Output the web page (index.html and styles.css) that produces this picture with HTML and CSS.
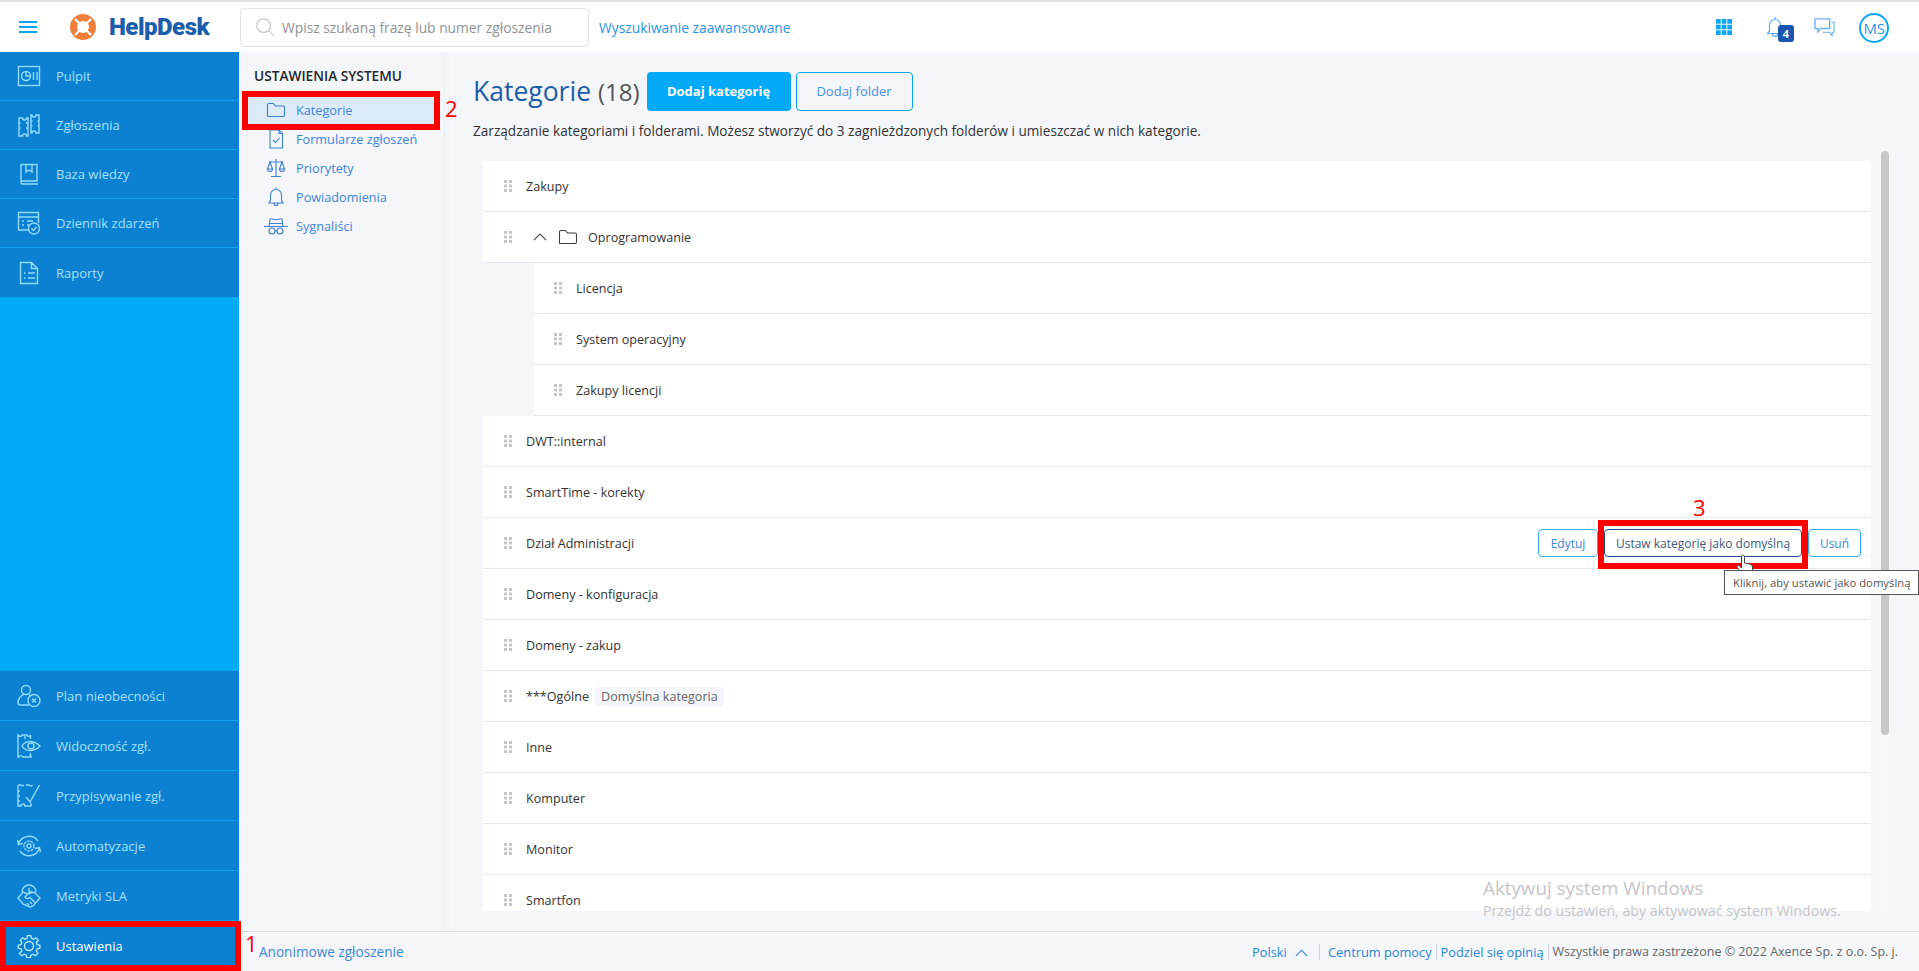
FILE: index.html
```html
<!DOCTYPE html>
<html lang="pl">
<head>
<meta charset="utf-8">
<title>HelpDesk - Kategorie</title>
<link rel="stylesheet" href="styles.css">
</head>
<body>
<svg class="sprite" width="0" height="0" aria-hidden="true">
  <symbol id="folder" viewBox="0 0 20 16"><path d="M1.5 14V3a1.5 1.5 0 0 1 1.5-1.500h4.500l2 2.500H17a1.500 1.500 0 0 1 1.500 1.500V13a1.500 1.500 0 0 1-1.500 1.500H2a.5.5 0 0 1-.5-.5z" fill="none" stroke="currentColor" stroke-width="1.100"/></symbol>
  <symbol id="grip" viewBox="0 0 8 12"><g fill="#c4c6c9"><rect x="0" y="0" width="3" height="3"/><rect x="5" y="0" width="3" height="3"/><rect x="0" y="4.500" width="3" height="3"/><rect x="5" y="4.500" width="3" height="3"/><rect x="0" y="9" width="3" height="3"/><rect x="5" y="9" width="3" height="3"/></g></symbol>
</svg>
<div class="app">
  <header class="topbar">
    <button class="burger" aria-label="Menu"><span></span><span></span><span></span></button>
    <div class="logo">
      <svg width="28" height="28" viewBox="0 0 28 28"><circle cx="14" cy="14" r="9.500" fill="none" stroke="#f07f3c" stroke-width="7"/><g stroke="#fff" stroke-width="2.200"><path d="M6 6l5 5M22 6l-5 5M6 22l5-5M22 22l-5-5"/></g></svg>
      <span class="logo-text">HelpDesk</span>
    </div>
    <div class="search">
      <svg width="20" height="20" viewBox="0 0 22 22" fill="none" stroke="#c8cbce" stroke-width="1.400"><circle cx="9.500" cy="9.500" r="7.500"/><path d="M15 15l6 6"/></svg>
      <span>Wpisz szukaną frazę lub numer zgłoszenia</span>
    </div>
    <a class="adv">Wyszukiwanie zaawansowane</a>
    <div class="top-icons">
      <svg class="grid-ic" width="16" height="16" viewBox="0 0 17 17" fill="#0aa6f5"><rect width="5" height="5"/><rect x="6" width="5" height="5"/><rect x="12" width="5" height="5"/><rect y="6" width="5" height="5"/><rect x="6" y="6" width="5" height="5"/><rect x="12" y="6" width="5" height="5"/><rect y="12" width="5" height="5"/><rect x="6" y="12" width="5" height="5"/><rect x="12" y="12" width="5" height="5"/></svg>
      <div class="bell">
        <svg width="18" height="22" viewBox="0 0 18 22" fill="none" stroke="#5aaaf5" stroke-width="1.200"><path d="M9 1v2M3.500 15V9a5.500 5.500 0 0 1 11 0v6l2 2.500H1.500zM6.500 18a2.500 2.500 0 0 0 5 0"/></svg>
        <span class="badge">4</span>
      </div>
      <svg class="chat-ic" width="21" height="20" viewBox="0 0 22 20" fill="none" stroke="#6fb2f5" stroke-width="1.200"><path d="M1 1.500h15.500v10H7L4 15v-3.500H1z" stroke-width="1.500"/><path d="M19 5h2v10.500h-2V19l-3-3.500H9"/></svg>
      <div class="avatar">MS</div>
    </div>
  </header>

  <div class="middle">
    <nav class="side">
      <div class="side-group">
        <a class="side-item"><svg class="side-ic" viewBox="0 0 24 24"><rect x="1.500" y="2.500" width="21" height="19"/><circle cx="9" cy="12" r="4.500"/><path d="M9 8v4h4M16.500 8v8M20 8v8"/></svg><span>Pulpit</span></a>
        <a class="side-item"><svg class="side-ic" viewBox="0 0 24 24"><path d="M2 5h3.500a2 2 0 0 0 4 0H11v18H9.500a2 2 0 0 0-4 0H2zM14 2h1a2 2 0 0 0 4 0h3v18h-3a2 2 0 0 0-4 0h-1zM2 10h1.500M2 15h1.500M11 10H9M11 15H9M14 8h1.500M14 13h1.500M22 8h-1.500M22 13h-1.500"/></svg><span>Zgłoszenia</span></a>
        <a class="side-item"><svg class="side-ic" viewBox="0 0 24 24"><path d="M4 2.500h16V19H5.500A1.500 1.500 0 0 0 4 20.500v-18zM4 20.500A1.500 1.500 0 0 0 5.500 22H21M9 2.500V10l3-2 3 2V2.500"/></svg><span>Baza wiedzy</span></a>
        <a class="side-item"><svg class="side-ic" viewBox="0 0 24 24"><path d="M12 19H1.500V1.500h20V12M1.500 6h20M5 10h2M10 10h6M5 14h2M10 14h2"/><circle cx="17" cy="17.500" r="5.500"/><path d="M14.500 17.500l2 2 3-3.500"/></svg><span>Dziennik zdarzeń</span></a>
        <a class="side-item"><svg class="side-ic" viewBox="0 0 24 24"><path d="M3.500 1.500h11l6 6v15h-17zM14.500 1.500v6h6M7 12h1.500M11 12h7M7 17h1.500M11 17h7"/></svg><span>Raporty</span></a>
      </div>
      <div class="side-group bottom">
        <a class="side-item tall"><svg class="side-ic" viewBox="0 0 24 24"><circle cx="9" cy="6" r="4.500"/><path d="M12 21H3a2 2 0 0 1-2-2c0-4 3-8 6-8.500M12 11c1 .3 1.500.5 2 1"/><circle cx="17" cy="16.500" r="6"/><path d="M15 14.500l4 4M19 14.500l-4 4"/></svg><span>Plan nieobecności</span></a>
        <a class="side-item tall"><svg class="side-ic" viewBox="0 0 24 24"><path d="M8 5V1H5a1.800 1.800 0 0 1-3.500 0H1v22h1a1.800 1.800 0 0 1 3.500 0H14v-1a1.800 1.800 0 0 1 0-3M9 1h1a1.800 1.800 0 0 0 3.500 0v4"/><path d="M5 12c3.500-6 12-6 18 0-6 6-14.500 6-18 0z"/><circle cx="14" cy="12" r="3"/></svg><span>Widoczność zgł.</span></a>
        <a class="side-item tall"><svg class="side-ic" viewBox="0 0 24 24"><path d="M9 1h3a2 2 0 0 0 3.500 0M1 1h3a2 2 0 0 0 3 0M1 1v21h3a2 2 0 0 1 4 0h6v-3M1 7h2M1 12h2M1 17h2"/><path d="M9 13l4 5L22.500 1"/></svg><span>Przypisywanie zgł.</span></a>
        <a class="side-item tall"><svg class="side-ic" viewBox="0 0 24 24"><path d="M1.500 10A11 11 0 0 1 21 7M22.500 14A11 11 0 0 1 3 17M.5 6l1 4.500L6 9.500M23.500 18l-1-4.500-4.500 1"/><circle cx="12" cy="12" r="5" stroke-dasharray="2.500 1"/><circle cx="12" cy="12" r="2"/></svg><span>Automatyzacje</span></a>
        <a class="side-item tall"><svg class="side-ic" viewBox="0 0 24 24"><path d="M5 8a7 7 0 0 1 14 0M12 4v4h3M1 14l5-6 5 2 6-2 6 6-7 8-3 1-7-3zM11 10l-3 3c1 2 3 2 5 .500l5 5M13 18l2 2M10 19l2 2"/></svg><span>Metryki SLA</span></a>
        <a class="side-item tall current"><svg class="side-ic" viewBox="0 0 24 24"><path d="M10 1h4l.600 3 2.400 1 2.500-1.700 2.800 2.800L20 8.500l1 2.400 3 .600v3.500l-3 .6-1 2.400 1.800 2.500-2.800 2.800-2.500-1.700-2.400 1-.6 2.900h-4l-.6-2.900-2.400-1-2.500 1.700-2.800-2.800L4 18l-1-2.400-3-.6V11.500l3-.6 1-2.400-1.800-2.500L5 3.300 7.500 5l2.400-1z" transform="translate(1.300 .8) scale(.9)"/><circle cx="12" cy="12" r="4.500"/></svg><span>Ustawienia</span></a>
      </div>
    </nav>

    <aside class="subnav">
      <h2>USTAWIENIA SYSTEMU</h2>
      <a class="sub-item active"><svg class="sub-ic" viewBox="0 0 20 16"><use href="#folder"/></svg><span>Kategorie</span></a>
      <a class="sub-item"><svg class="sub-ic" viewBox="0 0 20 20"><path d="M4 1h9l3.500 3.500V19H4zM13 1v3.500h3.500M7 11l2.500 2.500L13.500 9"/></svg><span>Formularze zgłoszeń</span></a>
      <a class="sub-item"><svg class="sub-ic" viewBox="0 0 20 20"><path d="M10 1v17M5 18.500h10M3 4h14M4 4L1.500 11h5zM16 4l-2.500 7h5zM1.500 11a2.500 2.500 0 0 0 5 0M13.500 11a2.500 2.500 0 0 0 5 0"/></svg><span>Priorytety</span></a>
      <a class="sub-item"><svg class="sub-ic" viewBox="0 0 20 20"><path d="M10 .5v2M4.500 13V8a5.500 5.500 0 0 1 11 0v5l1.500 3H3zM8 16.500a2 2 0 0 0 4 0"/></svg><span>Powiadomienia</span></a>
      <a class="sub-item"><svg class="sub-ic wide" viewBox="0 0 24 20"><path d="M0 10.500h24M5 10l1-6c0-1.500 1.500-1.500 2.500-1 1.500.7 5 .7 7 0 1-.5 2.500-.5 2.500 1l1 6M5.500 7.500h13"/><circle cx="8" cy="15" r="3"/><circle cx="16" cy="15" r="3"/><path d="M11 15h2"/></svg><span>Sygnaliści</span></a>
    </aside>

    <main class="content">
      <div class="title-row">
        <h1>Kategorie <small>(18)</small></h1>
        <button class="btn primary">Dodaj kategorię</button>
        <button class="btn outline-big">Dodaj folder</button>
      </div>
      <p class="lead">Zarządzanie kategoriami i folderami. Możesz stworzyć do 3 zagnieżdzonych folderów i umieszczać w nich kategorie.</p>
      <div class="list-wrap">
        <ul class="list">
          <li class="row"><svg class="grip"><use href="#grip"/></svg><span>Zakupy</span></li>
          <li class="row folder-row"><svg class="grip"><use href="#grip"/></svg><svg class="chev" viewBox="0 0 14 8"><path d="M1 7l6-6 6 6"/></svg><svg class="f-ic" viewBox="0 0 20 16"><use href="#folder"/></svg><span>Oprogramowanie</span></li>
          <li class="row sub"><svg class="grip"><use href="#grip"/></svg><span>Licencja</span></li>
          <li class="row sub"><svg class="grip"><use href="#grip"/></svg><span>System operacyjny</span></li>
          <li class="row sub"><svg class="grip"><use href="#grip"/></svg><span>Zakupy licencji</span></li>
          <li class="row"><svg class="grip"><use href="#grip"/></svg><span>DWT::internal</span></li>
          <li class="row"><svg class="grip"><use href="#grip"/></svg><span>SmartTime - korekty</span></li>
          <li class="row hover"><svg class="grip"><use href="#grip"/></svg><span>Dział Administracji</span>
            <div class="row-actions">
              <button class="mini edit">Edytuj</button>
              <button class="mini dark">Ustaw kategorię jako domyślną</button>
              <button class="mini del">Usuń</button>
            </div>
          </li>
          <li class="row"><svg class="grip"><use href="#grip"/></svg><span>Domeny - konfiguracja</span></li>
          <li class="row"><svg class="grip"><use href="#grip"/></svg><span>Domeny - zakup</span></li>
          <li class="row"><svg class="grip"><use href="#grip"/></svg><span>***Ogólne</span><span class="tag">Domyślna kategoria</span></li>
          <li class="row"><svg class="grip"><use href="#grip"/></svg><span>Inne</span></li>
          <li class="row"><svg class="grip"><use href="#grip"/></svg><span>Komputer</span></li>
          <li class="row"><svg class="grip"><use href="#grip"/></svg><span>Monitor</span></li>
          <li class="row"><svg class="grip"><use href="#grip"/></svg><span>Smartfon</span></li>
        </ul>
        <div class="scroll"><div class="thumb"></div></div>
      </div>
      <footer class="foot">
        <a class="anon">Anonimowe zgłoszenie</a>
        <div class="foot-right">
          <a class="lang">Polski <svg class="chev small" viewBox="0 0 14 8"><path d="M1 7l6-6 6 6"/></svg></a>
          <a>Centrum pomocy</a>
          <a>Podziel się opinią</a>
          <span>Wszystkie prawa zastrzeżone © 2022 Axence Sp. z o.o. Sp. j.</span>
        </div>
      </footer>
    </main>
  </div>
</div>

<div class="mark m1"></div><div class="num n1">1</div>
<div class="mark m2"></div><div class="num n2">2</div>
<div class="mark m3"></div><div class="num n3">3</div>
<svg class="cursor" width="20" height="24" viewBox="0 0 20 24"><path d="M6 1.500c1-1 2.500 0 2.500 1V9l5 1c2 .5 3 1.500 3 3v4c0 3-2 5.500-5.500 5.500S5 20 3 16l-2-3c-.5-1.500 1-2.500 2-1.500L5.500 14V3z" fill="#fff" stroke="#444" stroke-width="1"/></svg>
<div class="tooltip">Kliknij, aby ustawić jako domyślną</div>
<div class="winmark"><div class="w1">Aktywuj system Windows</div><div class="w2">Przejdź do ustawień, aby aktywować system Windows.</div></div>
</body>
</html>
```
FILE: styles.css
```css
* { box-sizing: border-box; }
html, body { margin: 0; height: 100%; overflow: hidden; }
body { font-family: "Open Sans", "Noto Sans", sans-serif; font-size: 13px; color: #333; background: #f4f6fa; }
a { text-decoration: none; color: inherit; }
button { font-family: inherit; }
.sprite { position: absolute; }
.app { height: 971px; display: flex; flex-direction: column; }

.topbar { height: 52px; flex: none; background: #fff; border-top: 2px solid #dfe0e2; display: flex; align-items: center; }
.burger { width: 18px; height: 12px; margin-left: 19px; padding: 0; border: 0; background: none; display: flex; flex-direction: column; justify-content: space-between; }
.burger span { display: block; height: 2px; background: #0aa6f5; }
.logo { display: flex; align-items: center; margin-left: 32px; width: 171px; }
.logo svg { flex: none; }
.logo-text { font-family: Roboto, sans-serif; font-weight: 900; font-size: 24px; letter-spacing: -.5px; color: #1c5dab; margin-left: 12px; }
.search { width: 349px; height: 39px; border: 1px solid #e1e3e6; border-radius: 4px; display: flex; align-items: center; padding-left: 14px; gap: 7px; font-size: 13.800px; color: #8f9296; white-space: nowrap; }
.adv { margin-left: 10px; color: #2b95e6; font-size: 13.800px; }
.top-icons { margin-left: auto; display: flex; align-items: center; padding-right: 30px; }
.grid-ic { margin-right: 34px; }
.bell { position: relative; width: 18px; height: 22px; margin-right: 30px; }
.badge { position: absolute; left: 12px; top: 9px; width: 16px; height: 17px; border-radius: 3px; background: #1a56ad; color: #fff; font-size: 11px; font-weight: 700; text-align: center; line-height: 17px; }
.chat-ic { margin-right: 24px; }
.avatar { width: 30px; height: 30px; margin-top: 1px; border-radius: 50%; border: 2px solid #0aa6f5; color: #2b95e6; font-size: 15px; display: flex; align-items: center; justify-content: center; letter-spacing: -.3px; }

.middle { flex: 1; min-height: 0; display: flex; }
.side { width: 239px; flex: none; background: #04a9f8; display: flex; flex-direction: column; justify-content: space-between; }
.side-item { display: flex; align-items: center; height: 49px; background: #0c80d1; border-bottom: 1px solid #0aa0ee; padding-left: 17px; color: #a3e0fb; font-size: 13px; }
.side-group > .side-item:last-child { border-bottom: 0; }
.side-item.tall { height: 50px; }
.side-item.current { color: #fff; }
.side-ic { width: 24px; height: 24px; flex: none; margin-right: 15px; fill: none; stroke: #8fdcfb; stroke-width: 1.400; }
.current .side-ic { stroke: #b8ecff; }

.subnav { width: 204px; flex: none; padding-top: 15px; background: #f4f6fa; }
.subnav h2 { margin: 0 0 10px 15px; font-size: 13.700px; font-weight: 600; color: #23262a; line-height: 18px; white-space: nowrap; }
.sub-item { display: flex; align-items: center; height: 29px; padding-left: 23px; margin: 0 0 0 9px; width: 186px; color: #3f85d9; font-size: 12.700px; white-space: nowrap; }
.sub-item.active { background: #dbebf8; }
.sub-ic { width: 20px; height: 20px; flex: none; margin-right: 10px; fill: none; stroke: #3f7fd0; stroke-width: 1.100; margin-left: -5px; }
.sub-ic.wide { width: 26px; margin-left: -8px; margin-right: 7px; }
.sub-item.active .sub-ic { color: #3f7fd0; height: 16px; }

.content { flex: 1; min-width: 0; position: relative; background: #f4f6fa; box-shadow: inset 7px 0 6px -5px #eceff3; display: flex; flex-direction: column; }
.title-row { display: flex; align-items: center; padding: 20px 0 0 30px; height: 58px; flex: none; }
.title-row h1 { margin: 0; font-size: 26.500px; font-weight: 400; color: #1c5dab; line-height: 38px; white-space: nowrap; }
.title-row small { font-size: 24px; color: #555; }
.btn { height: 39px; border-radius: 4px; font-size: 13px; }
.primary { margin-left: 7px; width: 144px; border: 0; background: #04a9f8; color: #fff; font-weight: 700; }
.outline-big { margin-left: 5px; width: 117px; border: 1px solid #0aa6f5; background: transparent; color: #4a90e2; }
.lead { margin: 12px 0 0 30px; font-size: 13.600px; color: #333; line-height: 18px; height: 18px; white-space: nowrap; flex: none; }
.list-wrap { margin-top: 21px; height: 750px; flex: none; padding-left: 40px; display: flex; }
.list { list-style: none; margin: 0; padding: 0; width: 1388px; height: 750px; overflow: hidden; }
.row { position: relative; display: flex; align-items: center; height: 51px; background: #fff; border-bottom: 1px solid #e4e8ec; padding-left: 21px; font-size: 12.600px; color: #333; white-space: nowrap; }
.row .grip { width: 8px; height: 12px; flex: none; margin-right: 14px; }
.row.sub { margin-left: 51px; padding-left: 20px; }
.folder-row .chev { margin-left: 7px; margin-right: 11px; }
.chev { width: 14px; height: 8px; fill: none; stroke: #4b5057; stroke-width: 1.200; }
.f-ic { width: 20px; height: 16px; color: #3a3f45; margin-right: 10px; }
.tag { margin-left: 6px; background: #f4f6fa; height: 19px; line-height: 19px; padding: 0 6px; border-radius: 4px; color: #666; }
.row-actions { margin-left: auto; margin-right: 10px; display: flex; gap: 6px; }
.mini { height: 28px; border: 1px solid #2faef0; border-radius: 4px; background: #fff; color: #3f85d9; font-size: 12px; padding: 0; white-space: nowrap; }
.mini.edit { width: 60px; }
.mini.del { width: 53px; }
.mini.dark { border-color: #1d4f91; color: #3d5a80; width: 198px; }
.scroll { width: 18px; position: relative; }
.scroll::before { content: ""; position: absolute; left: 10px; top: -10px; bottom: 0; width: 8px; background: #f8f9fc; }
.thumb { position: absolute; left: 10px; top: -10px; width: 8px; height: 584px; background: #c7c7c7; border-radius: 4px; }

.foot { position: relative; border-top: 1px solid #d9dce0; height: 40px; flex: none; margin-top: 20px; margin-left: -204px; display: flex; align-items: center; justify-content: space-between; font-size: 13.600px; background: #f4f6fa; padding: 0 21px 0 20px; }
.anon { color: #3f85d9; }
.foot-right { display: flex; align-items: center; font-size: 12.500px; color: #666; }
.foot-right a { color: #2b85d9; font-size: 12.800px; padding: 0 4px; border-right: 1px solid #ccd2d8; line-height: 16px; }
.foot-right span { padding-left: 4px; }
.foot-right .lang { padding-right: 11px; margin-right: 4px; }
.chev.small { margin-left: 5px; stroke: #2b85d9; width: 13px; }

.mark { position: absolute; border: 6px solid #f00; pointer-events: none; }
.m1 { left: 0; top: 921px; width: 241px; height: 50px; }
.m2 { left: 242px; top: 91px; width: 198px; height: 39px; }
.m3 { left: 1598px; top: 520px; width: 210px; height: 49px; }
.num { position: absolute; color: #f00; font-family: "Open Sans", sans-serif; font-size: 22px; line-height: 24px; }
.n1 { left: 245px; top: 931px; }
.n2 { left: 445px; top: 96px; }
.n3 { left: 1693px; top: 495px; }
.cursor { position: absolute; left: 1736px; top: 554px; }
.tooltip { position: absolute; left: 1724px; top: 570px; height: 25px; width: 195px; background: #fff; border: 1px solid #555; color: #555; font-size: 11.300px; line-height: 23px; padding-left: 8px; white-space: nowrap; }
.winmark { position: absolute; left: 1483px; top: 875px; color: #c4c5c8; white-space: nowrap; }
.w1 { font-family: "Open Sans", sans-serif; font-size: 18.800px; line-height: 26px; }
.w2 { font-size: 14.200px; line-height: 20px; }
```
